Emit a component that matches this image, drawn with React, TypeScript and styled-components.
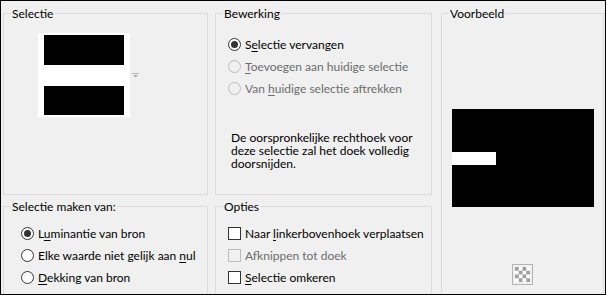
import React from "react";
import styled, { createGlobalStyle } from "styled-components";

const Global = createGlobalStyle`
  html, body { margin: 0; padding: 0; background: #f0f0f0; }
  body {
    font-family: Lato, "Noto Sans", "Segoe UI", sans-serif;
    font-size: 12px;
    color: #000;
  }
`;

const Frame = styled.div`
  width: 606px;
  height: 295px;
  box-sizing: border-box;
  border: 1px solid #000;
  background: #f0f0f0;
  overflow: hidden;
  padding: 12px 0 0 2px;
  display: grid;
  grid-template-columns: 205px 217px 165px;
  grid-template-rows: 182px 120px;
  column-gap: 7px;
  row-gap: 11px;
`;

const Group = styled.div<{ $span?: boolean; $shift?: number }>`
  position: relative;
  box-sizing: border-box;
  border: 1px solid #dcdcdc;
  margin-left: ${(p) => p.$shift ?? 0}px;
  ${(p) => (p.$span ? "grid-row: 1 / span 2; grid-column: 3;" : "")}
`;

const Legend = styled.span`
  position: absolute;
  top: -8px;
  left: 7px;
  padding: 0 1px;
  line-height: 15px;
  background: #f0f0f0;
  white-space: nowrap;
`;

const Body = styled.div<{ $top: number; $left: number }>`
  display: flex;
  flex-direction: column;
  padding-top: ${(p) => p.$top}px;
  padding-left: ${(p) => p.$left}px;
`;

const Row = styled.div<{ $disabled?: boolean }>`
  display: flex;
  align-items: center;
  gap: 4px;
  height: 22px;
  white-space: nowrap;
  color: ${(p) => (p.$disabled ? "#6d6d6d" : "#000")};
`;

const RadioMark = styled.span<{ $checked?: boolean; $disabled?: boolean }>`
  position: relative;
  width: 13px;
  height: 13px;
  box-sizing: border-box;
  border-radius: 50%;
  border: 1px solid ${(p) => (p.$disabled ? "#bcbcbc" : "#333")};
  background: ${(p) => (p.$disabled ? "#f0f0f0" : "#fff")};
  flex: none;
  &::after {
    content: "";
    display: ${(p) => (p.$checked ? "block" : "none")};
    position: absolute;
    left: 2px;
    top: 2px;
    width: 7px;
    height: 7px;
    border-radius: 50%;
    background: #333;
  }
`;

const CheckMark = styled.span<{ $disabled?: boolean }>`
  width: 13px;
  height: 13px;
  box-sizing: border-box;
  border: 1px solid ${(p) => (p.$disabled ? "#bcbcbc" : "#333")};
  background: ${(p) => (p.$disabled ? "#f0f0f0" : "#fff")};
  flex: none;
`;

const Key = styled.span`
  text-decoration: underline;
  text-underline-offset: 2px;
`;

const Note = styled.div`
  display: flex;
  flex-direction: column;
  margin: 32px 0 0 3px;
`;

const NoteLine = styled.span`
  display: block;
  height: 13px;
  line-height: 13px;
  white-space: nowrap;
`;

const ThumbRow = styled.div`
  display: flex;
  align-items: center;
  gap: 2px;
  margin: 19px 0 0 34px;
`;

const PreviewBody = styled.div`
  display: flex;
  flex-direction: column;
  align-items: center;
  padding-top: 95px;
`;

const CheckerButton = styled.div`
  margin-top: 57px;
  width: 21px;
  height: 21px;
  box-sizing: border-box;
  border: 1px solid #b4b4b4;
  background: #f0f0f0;
  display: flex;
  align-items: center;
  justify-content: center;
`;

type Opt = { pre?: string; key?: string; post?: string; checked?: boolean; disabled?: boolean };

const Label = ({ pre, k, post }: { pre?: string; k?: string; post?: string }) => (
  <span>
    {pre}
    {k && <Key>{k}</Key>}
    {post}
  </span>
);

const Radios = ({ items }: { items: Opt[] }) => (
  <>
    {items.map((o, i) => (
      <Row key={i} $disabled={o.disabled}>
        <RadioMark $checked={o.checked} $disabled={o.disabled} />
        <Label pre={o.pre} k={o.key} post={o.post} />
      </Row>
    ))}
  </>
);

const Checks = ({ items }: { items: Opt[] }) => (
  <>
    {items.map((o, i) => (
      <Row key={i} $disabled={o.disabled}>
        <CheckMark $disabled={o.disabled} />
        <Label pre={o.pre} k={o.key} post={o.post} />
      </Row>
    ))}
  </>
);

export default function App() {
  return (
    <>
      <Global />
      <Frame>
        <Group>
          <Legend>Selectie</Legend>
          <ThumbRow>
            <svg width="92" height="84" viewBox="0 0 92 84">
              <rect width="92" height="84" fill="#fff" />
              <rect x="6" y="2" width="80" height="30" fill="#000" />
              <rect x="6" y="53" width="80" height="29" fill="#000" />
            </svg>
            <svg width="7" height="5" viewBox="0 0 7 5">
              <rect x="0" y="0" width="7" height="1" fill="#b8b8b8" />
              <path d="M1 2 H6 L3.5 4.5 Z" fill="#a8a8a8" />
            </svg>
          </ThumbRow>
        </Group>

        <Group>
          <Legend>Bewerking</Legend>
          <Body $top={19} $left={12}>
            <Radios
              items={[
                { pre: "S", key: "e", post: "lectie vervangen", checked: true },
                { key: "T", post: "oevoegen aan huidige selectie", disabled: true },
                { pre: "Van ", key: "h", post: "uidige selectie aftrekken", disabled: true },
              ]}
            />
            <Note>
              <NoteLine>De oorspronkelijke rechthoek voor</NoteLine>
              <NoteLine>deze selectie zal het doek volledig</NoteLine>
              <NoteLine>doorsnijden.</NoteLine>
            </Note>
          </Body>
        </Group>

        <Group $span $shift={2}>
          <Legend>Voorbeeld</Legend>
          <PreviewBody>
            <svg width="142" height="98" viewBox="0 0 142 98">
              <rect width="142" height="98" fill="#000" />
              <rect x="0" y="43" width="44" height="13" fill="#fff" />
            </svg>
            <CheckerButton>
              <svg width="15" height="15" viewBox="0 0 16 16">
                <rect width="16" height="16" fill="#fff" />
                <path
                  d="M0 0h4v4H0zM8 0h4v4H8zM4 4h4v4H4zM12 4h4v4h-4zM0 8h4v4H0zM8 8h4v4H8zM4 12h4v4H4zM12 12h4v4h-4z"
                  fill="#a0a0a0"
                />
              </svg>
            </CheckerButton>
          </PreviewBody>
        </Group>

        <Group>
          <Legend>Selectie maken van:</Legend>
          <Body $top={15} $left={17}>
            <Radios
              items={[
                { pre: "L", key: "u", post: "minantie van bron", checked: true },
                { pre: "Elke waarde niet gelijk aan ", key: "n", post: "ul" },
                { key: "D", post: "ekking van bron" },
              ]}
            />
          </Body>
        </Group>

        <Group>
          <Legend>Opties</Legend>
          <Body $top={15} $left={12}>
            <Checks
              items={[
                { pre: "Naar ", key: "l", post: "inkerbovenhoek verplaatsen" },
                { pre: "Af", key: "k", post: "nippen tot doek", disabled: true },
                { key: "S", post: "electie omkeren" },
              ]}
            />
          </Body>
        </Group>
      </Frame>
    </>
  );
}
